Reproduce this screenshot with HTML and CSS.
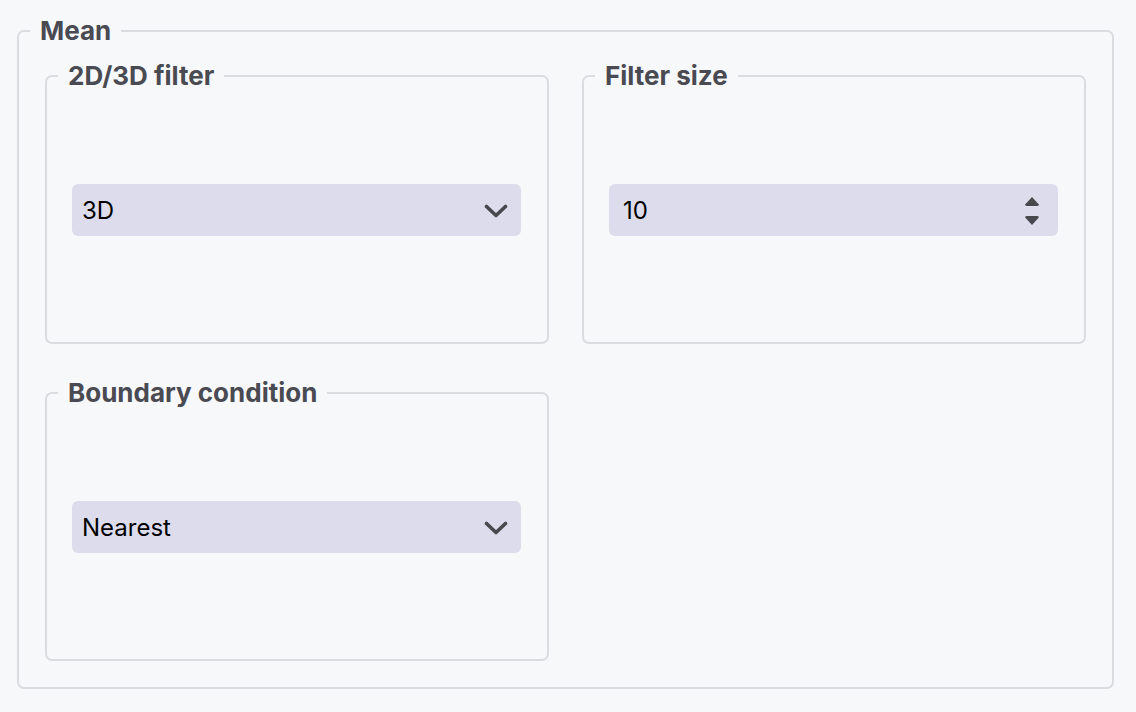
FILE: index.html
```html
<!DOCTYPE html>
<html lang="en">
<head>
<meta charset="utf-8">
<title>Mean</title>
<link rel="stylesheet" href="styles.css">
</head>
<body>
<fieldset class="group">
  <legend class="group-legend">Mean</legend>
  <div class="grid">
    <fieldset class="field">
      <legend class="field-legend">2D/3D filter</legend>
      <div class="field-body">
        <div class="select">
          <span class="value">3D</span>
          <svg class="chevron" width="24" height="16" viewBox="0 0 24 16"><path d="M2.5 3.5 L12 12.5 L21.5 3.5" fill="none" stroke="#48484f" stroke-width="3.6" stroke-linecap="round" stroke-linejoin="round"/></svg>
        </div>
      </div>
    </fieldset>
    <fieldset class="field">
      <legend class="field-legend">Filter size</legend>
      <div class="field-body">
        <div class="select number">
          <span class="value">10</span>
          <svg class="spinner" width="16" height="32" viewBox="0 0 16 32"><path d="M8 2 L14.6 9.3 Q15.4 11 13.4 11 L2.6 11 Q0.6 11 1.4 9.3 Z" fill="#48484f"/><path d="M8 30 L14.6 22.7 Q15.4 21 13.4 21 L2.6 21 Q0.6 21 1.4 22.7 Z" fill="#48484f"/></svg>
        </div>
      </div>
    </fieldset>
    <fieldset class="field">
      <legend class="field-legend">Boundary condition</legend>
      <div class="field-body">
        <div class="select">
          <span class="value">Nearest</span>
          <svg class="chevron" width="24" height="16" viewBox="0 0 24 16"><path d="M2.5 3.5 L12 12.5 L21.5 3.5" fill="none" stroke="#48484f" stroke-width="3.6" stroke-linecap="round" stroke-linejoin="round"/></svg>
        </div>
      </div>
    </fieldset>
  </div>
</fieldset>
</body>
</html>
```
FILE: styles.css
```css
html, body {
  margin: 0;
  padding: 0;
  background: #f7f8fa;
}
body {
  font-family: Inter, "Noto Sans", "Liberation Sans", sans-serif;
  padding-top: 16px;
}
.group {
  margin: 0 22px 0 17px;
  padding: 0 26px 26px 26px;
  border: 2px solid #dcdce0;
  border-radius: 7px;
  min-width: 0;
}
.group-legend,
.field-legend {
  font-size: 26px;
  font-weight: 700;
  line-height: 30px;
  color: #4a4a52;
  padding: 0 10px;
}
.group-legend {
  margin-left: -15px;
}
.field-legend {
  margin-left: 11px;
}
.grid {
  display: grid;
  grid-template-columns: 1fr 1fr;
  column-gap: 33px;
  row-gap: 34px;
  padding-top: 15px;
}
.field {
  margin: 0;
  padding: 0;
  border: 2px solid #dcdce0;
  border-radius: 7px;
  min-width: 0;
}
.field-body {
  padding: 93px 26px 106px 25px;
}
.select {
  height: 52px;
  box-sizing: border-box;
  background: #dddcec;
  border-radius: 6px;
  display: flex;
  align-items: center;
  justify-content: space-between;
  padding: 0 13px 0 10px;
  font-size: 24px;
  color: #000;
}
.select.number {
  padding: 0 18px 0 14px;
}
.chevron {
  display: block;
  margin-top: 2px;
}
.spinner {
  display: block;
  margin-top: 1px;
}
```
